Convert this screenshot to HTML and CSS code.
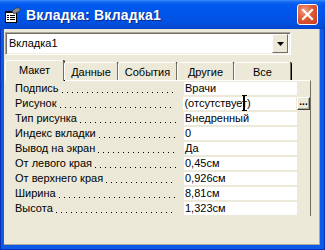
FILE: index.html
```html
<!DOCTYPE html>
<html>
<head>
<meta http-equiv="Content-Type" content="text/html; charset=utf-8">
<title>Вкладка: Вкладка1</title>
<link rel="stylesheet" href="styles.css">
</head>
<body>
<div class="window">
    <div class="titlebar">
        <svg class="app_icon" width="17" height="16" viewBox="0 0 17 16">
            <rect x="1.5" y="4.5" width="11" height="11" fill="#fff" stroke="#000"/>
            <rect x="1" y="4" width="12" height="2" fill="#000"/>
            <rect x="3" y="8" width="2" height="1" fill="#000"/>
            <rect x="6" y="8" width="5" height="1" fill="#000"/>
            <rect x="3" y="10" width="2" height="1" fill="#000"/>
            <rect x="6" y="10" width="5" height="1" fill="#000"/>
            <rect x="3" y="12" width="2" height="1" fill="#000"/>
            <rect x="6" y="12" width="5" height="1" fill="#000"/>
            <polygon points="8,4 12,1 16,1 16,4 12,6 10,7" fill="#8c8c8c" stroke="#3c3c3c" stroke-width="0.8"/>
        </svg>
        <span class="title">Вкладка: Вкладка1</span>
        <a href="javascript:;" class="close">
            <svg width="19" height="19" viewBox="0 0 19 19">
                <path d="M5 5 L14 14 M14 5 L5 14" stroke="#fff" stroke-width="2.2" stroke-linecap="square"/>
            </svg>
        </a>
    </div>
    <div class="client">
        <div class="combo">
            <span class="combo_text">Вкладка1</span>
            <span class="combo_btn">
                <svg width="7" height="4" viewBox="0 0 7 4"><polygon points="0,0 7,0 3.5,4" fill="#000"/></svg>
            </span>
        </div>
        <div class="tabs">
            <div class="tab active">Макет</div>
            <div class="tab w54">Данные</div>
            <div class="tab w59">События</div>
            <div class="tab w57">Другие</div>
            <div class="tab w57">Все</div>
        </div>
        <div class="panel">
            <div class="row"><span class="name"><span class="label">Подпись</span><span class="dots"></span></span><span class="value">Врачи</span></div>
            <div class="row"><span class="name"><span class="label">Рисунок</span><span class="dots"></span></span><span class="value">(отсутствует)<i class="ibeam"></i></span><span class="builder">...</span></div>
            <div class="row"><span class="name"><span class="label">Тип рисунка</span><span class="dots"></span></span><span class="value">Внедренный</span></div>
            <div class="row"><span class="name"><span class="label">Индекс вкладки</span><span class="dots"></span></span><span class="value">0</span></div>
            <div class="row"><span class="name"><span class="label">Вывод на экран</span><span class="dots"></span></span><span class="value">Да</span></div>
            <div class="row"><span class="name"><span class="label">От левого края</span><span class="dots"></span></span><span class="value">0,45см</span></div>
            <div class="row"><span class="name"><span class="label">От верхнего края</span><span class="dots"></span></span><span class="value">0,926см</span></div>
            <div class="row"><span class="name"><span class="label">Ширина</span><span class="dots"></span></span><span class="value">8,81см</span></div>
            <div class="row"><span class="name"><span class="label">Высота</span><span class="dots"></span></span><span class="value">1,323см</span></div>
        </div>
    </div>
</div>
</body>
</html>
```

FILE: styles.css
```css
*{ margin: 0; padding: 0; box-sizing: border-box;}
body{ width: 325px; height: 250px; overflow: hidden; font-family: "Liberation Sans", Arial, sans-serif; font-size: 11px; color: #000;}

.window{ width: 325px; height: 250px; display: flex; flex-direction: column; background: #0d5ae6; box-shadow: inset 1px 0 #0831b8, inset -1px 0 #0831b8, inset 0 -1px #0831b8;}

/* title */
.titlebar{ height: 29px; display: flex; align-items: center; padding-left: 4px;
    background: linear-gradient(#3b8dfc 0, #1467f2 2px, #0058ee 5px, #0056ea 45%, #0050e0 80%, #0046cf 100%);}
.app_icon{ display: block; margin-top: 1px;}
.title{ margin-left: 5px; color: #fff; font-weight: bold; font-size: 14px; text-shadow: 1px 1px #0b2b8c; letter-spacing: 0.2px;}
.close{ margin-left: auto; margin-right: 7px; width: 21px; height: 21px; display: flex; align-items: center; justify-content: center;
    border: 1px solid #fff; border-radius: 3px; background: radial-gradient(circle at 35% 30%, #f0a088 0, #e05a34 45%, #c4391a 100%);}
.close svg{ display: block;}

/* client */
.client{ flex: 1; margin: 0 5px 5px 4px; background: #ece9d8; border-right: 1px solid #aca899; border-bottom: 1px solid #aca899;}

.combo{ display: flex; align-items: center; width: 286px; height: 23px; margin: 3px 0 0 1px; background: #fff;
    border: 1px solid; border-color: #aca899 #fff #fff #aca899; box-shadow: inset 1px 1px #716f64, inset -1px -1px #f1efe2;}
.combo_text{ flex: 1; padding-left: 3px; line-height: 19px;}
.combo_btn{ width: 16px; height: 19px; margin-right: 2px; display: flex; align-items: center; justify-content: center; background: #ece9d8;
    border: 1px solid; border-color: #fff #716f64 #716f64 #fff;}
.combo_btn svg{ display: block;}

/* tabs */
.tabs{ display: flex; align-items: flex-end; height: 20px; margin: 5px 0 0 1px; position: relative; z-index: 1;}
.tab{ height: 18px; line-height: 18px; text-align: center; background: #ece9d8;
    border-top: 1px solid #fff; border-left: 1px solid #fff; border-right: 1px solid #716f64; box-shadow: 1px 0 #000; border-radius: 2px 2px 0 0;}
.tab.active{ width: 59px; height: 21px; margin-bottom: -1px; line-height: 19px;}
.tab.w54{ width: 54px;}
.tab.w59{ width: 59px;}
.tab.w57{ width: 57px;}

/* properties */
.panel{ width: 306px; height: 136px; margin-left: 1px; padding: 1px 0 0 10px; border-top: 1px solid #fff; border-right: 1px solid #716f64;}
.row{ display: flex; height: 15px;}
.name{ width: 169px; display: flex;}
.label{ white-space: nowrap; line-height: 13px;}
.dots{ flex: 1; height: 1px; margin: 10px 8px 0 3px; background-image: linear-gradient(to right, #000 1px, transparent 1px); background-size: 5px 1px; background-repeat: repeat-x;}
.value{ position: relative; width: 113px; height: 13px; line-height: 13px; padding-left: 1px; background: #fff; white-space: nowrap;}
.builder{ width: 13px; height: 13px; margin-left: 1px; font-weight: bold; line-height: 8px; text-align: center; font-size: 10px; background: #ece9d8;
    border: 1px solid; border-color: #fff #404040 #404040 #fff; box-shadow: inset -1px -1px #aca899;}
.ibeam{ position: absolute; left: 59px; top: -2px; width: 5px; height: 16px; border-top: 1px solid #000; border-bottom: 1px solid #000;}
.ibeam::after{ content: ""; position: absolute; left: 1px; top: 0; width: 2px; height: 14px; background: #000;}
```
